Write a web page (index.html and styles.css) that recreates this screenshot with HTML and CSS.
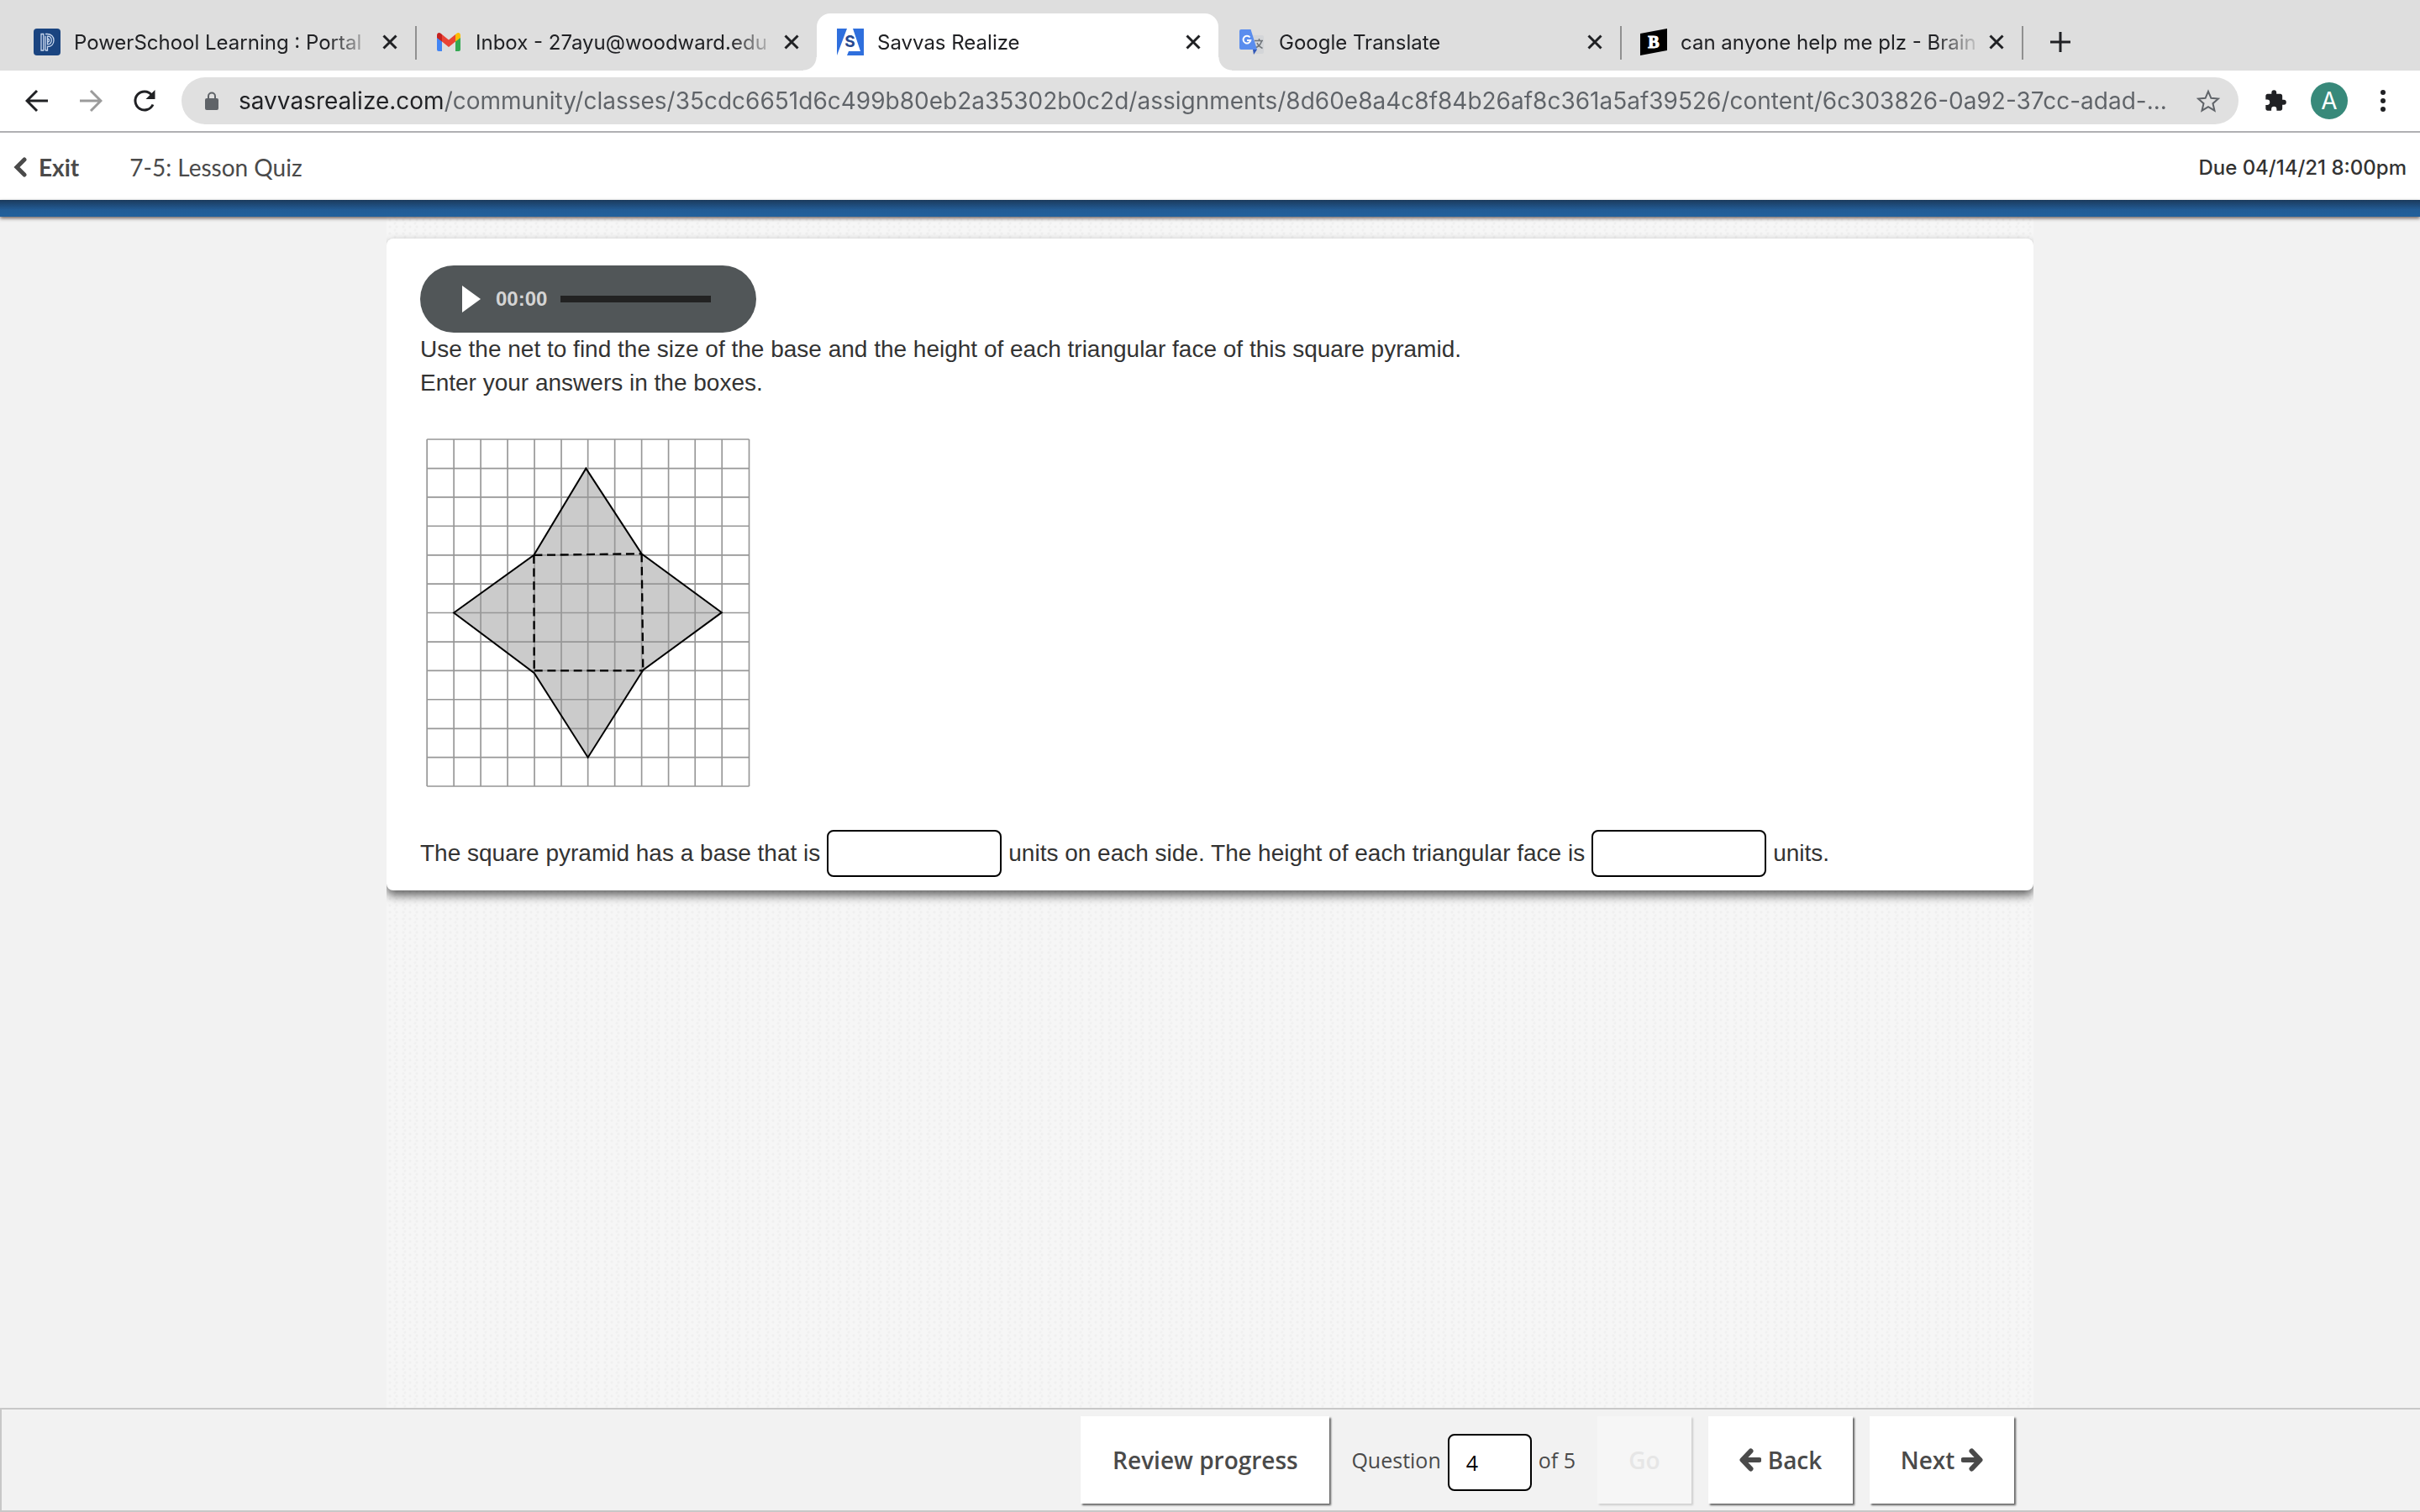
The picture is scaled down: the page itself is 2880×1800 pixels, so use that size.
FILE: index.html
```
<!DOCTYPE html>
<html lang="en">
<head>
    <meta charset="UTF-8">
    <meta name="viewport" content="width=device-width, initial-scale=1.0">
    <title>Savvas Realize</title>
    <link rel="stylesheet" href="styles.css">
</head>
<body>
    <!-- Browser tabs -->
    <nav class="tabs" aria-label="Tabs">
        <div class="tab">
            <svg class="favicon" viewBox="0 0 32 32">
                <rect width="32" height="32" rx="4" fill="#1a4480"/>
                <g fill="none" stroke="#c9d8ee" stroke-width="1.3">
                    <path d="M9 6.500v19.500h2.800V6.500zM14 26V8.800M14 26h2.500v-4.500c4.500 0 7.500-3 7.500-7.500s-3.200-7.500-8-7.500H14"/>
                    <path d="M16.500 9.200c2.800 0 4.700 2 4.700 4.800s-1.900 4.800-4.700 4.800zM16.500 12c1.400 0 2 .8 2 2s-.6 2-2 2"/>
                </g>
            </svg>
            <a class="tab-title" href="#">PowerSchool Learning : Portal</a>
            <button class="close" aria-label="Close tab"><svg viewBox="0 0 24 24"><path d="M4.500 4.500l15 15M19.500 4.500l-15 15"/></svg></button>
        </div>
        <div class="tab">
            <svg class="favicon" viewBox="0 0 32 32">
                <path d="M2 8v17q0 2 2 2h4V14z" fill="#4285f4"/>
                <path d="M30 8v17q0 2-2 2h-4V14z" fill="#34a853"/>
                <path d="M8 7l8 6.500L24 7v8.500L16 22l-8-6.500z" fill="#ea4335"/>
                <path d="M24 7l1.500-1.200C27.500 4.200 30 5.500 30 8v3l-6 4.500z" fill="#fbbc04"/>
                <path d="M8 7L6.500 5.800C4.500 4.200 2 5.500 2 8v3l6 4.500z" fill="#c5221f"/>
            </svg>
            <a class="tab-title" href="#">Inbox - 27ayu@woodward.edu</a>
            <button class="close" aria-label="Close tab"><svg viewBox="0 0 24 24"><path d="M4.500 4.500l15 15M19.500 4.500l-15 15"/></svg></button>
        </div>
        <div class="tab active">
            <svg class="favicon" viewBox="0 0 32 32">
                <path d="M0 0h32v32H0z" fill="#2f6fdd"/>
                <path d="M12 0h7l9 27H14l-2 5H0z" fill="#fff"/>
                <text x="15.500" y="22" text-anchor="middle" font-size="19" font-weight="700" fill="#27488f">S</text>
            </svg>
            <a class="tab-title" href="#">Savvas Realize</a>
            <button class="close" aria-label="Close tab"><svg viewBox="0 0 24 24"><path d="M4.500 4.500l15 15M19.500 4.500l-15 15"/></svg></button>
        </div>
        <div class="tab">
            <svg class="favicon" viewBox="0 0 32 32">
                <path d="M14 8h14q2 0 2 2v18q0 2-2 2H18z" fill="#d3d5d8"/>
                <path d="M17 25h5l-4 6z" fill="#3057b8"/>
                <path d="M3 1h11.500l7.500 24H3q-2 0-2-2V3q0-2 2-2z" fill="#5a8dee"/>
                <path d="M13.500 10.500a4.400 4.400 0 1 0 .8 3.500H10" fill="none" stroke="#fff" stroke-width="2"/>
                <path d="M19 14.500h10M24.500 12v2.500M27.500 14.500c-.8 4-3.500 6.500-6.500 8M22 17c1 2.500 3.500 5 6.500 6.500" fill="none" stroke="#6f7479" stroke-width="1.500"/>
            </svg>
            <a class="tab-title" href="#">Google Translate</a>
            <button class="close" aria-label="Close tab"><svg viewBox="0 0 24 24"><path d="M4.500 4.500l15 15M19.500 4.500l-15 15"/></svg></button>
        </div>
        <div class="tab">
            <svg class="favicon" viewBox="0 0 32 32">
                <path d="M0 6L32 0v26L0 32z" fill="#000"/>
                <text class="brainly-b" x="16" y="23" text-anchor="middle" font-size="20" font-weight="700" fill="#fff" stroke="#fff">B</text>
            </svg>
            <a class="tab-title" href="#">can anyone help me plz - Brain</a>
            <button class="close" aria-label="Close tab"><svg viewBox="0 0 24 24"><path d="M4.500 4.500l15 15M19.500 4.500l-15 15"/></svg></button>
        </div>
        <button class="new-tab" aria-label="New tab"><svg viewBox="0 0 24 24"><path d="M12 0v24M0 12h24"/></svg></button>
    </nav>

    <!-- Address bar -->
    <div class="toolbar">
        <div class="nav-buttons">
            <button class="tool" aria-label="Back"><svg viewBox="0 0 28 28"><path d="M27 14H3M14 2L2 14l12 12"/></svg></button>
            <button class="tool" aria-label="Forward" disabled><svg viewBox="0 0 28 28"><path d="M1 14h24M14 2l12 12-12 12"/></svg></button>
            <button class="tool" aria-label="Reload"><svg viewBox="0 0 28 28"><path d="M24 18.500A11 11 0 1 1 22.500 7"/><path class="solid" d="M26.500 1v11h-11z"/></svg></button>
        </div>
        <div class="address">
            <svg class="lock" viewBox="0 0 16 22"><path d="M2 8h12q2 0 2 2v10q0 2-2 2H2q-2 0-2-2V10q0-2 2-2z" fill="#5f6368"/><path d="M4 9V5.500a4 4 0 0 1 8 0V9" fill="none" stroke="#5f6368" stroke-width="2"/></svg>
            <input class="url" type="text" aria-label="Address" value="savvasrealize.com/community/classes/35cdc6651d6c499b80eb2a35302b0c2d/assignments/8d60e8a4c8f84b26af8c361a5af39526/content/6c303826-0a92-37cc-adad-...">
            <button class="star" aria-label="Bookmark this tab"><svg viewBox="0 0 28 28"><path d="M14 2.800l3.400 8 8.600.7-6.500 5.700 2 8.500-7.500-4.500-7.500 4.500 2-8.500L2 11.500l8.600-.7z"/></svg></button>
        </div>
        <div class="menu-buttons">
            <button class="tool" aria-label="Extensions"><svg viewBox="0 0 24 24"><path class="solid" d="M20.500 11H19V7c0-1.100-.9-2-2-2h-4V3.500a2.500 2.500 0 0 0-5 0V5H4c-1.100 0-2 .9-2 2v3.800h1.500a2.700 2.700 0 0 1 0 5.400H2V20c0 1.100.9 2 2 2h3.800v-1.500a2.700 2.700 0 0 1 5.400 0V22H17c1.100 0 2-.9 2-2v-4h1.500a2.500 2.500 0 0 0 0-5z"/></svg></button>
            <button class="avatar" aria-label="Profile">A</button>
            <button class="tool" aria-label="Menu"><svg viewBox="0 0 28 28"><g class="dots"><circle cx="14" cy="4" r="3"/><circle cx="14" cy="14" r="3"/><circle cx="14" cy="24" r="3"/></g></svg></button>
        </div>
    </div>

    <header class="quiz-header">
        <a class="exit" href="#">
            <svg viewBox="0 0 16 24"><path d="M13 3L4 12l9 9"/></svg>
            Exit
        </a>
        <h1 class="quiz-title">7-5: Lesson Quiz</h1>
        <span class="due">Due 04/14/21 8:00pm</span>
    </header>
    <div class="blue-bar"></div>

    <main class="content">
        <section class="card">
            <div class="audio">
                <button class="play" aria-label="Play"><svg viewBox="0 0 22 32"><path d="M0 0l22 16L0 32z" fill="#fff"/></svg></button>
                <span class="time">00:00</span>
                <div class="track"></div>
            </div>
            <p>Use the net to find the size of the base and the height of each triangular face of this square pyramid.</p>
            <p>Enter your answers in the boxes.</p>

            <!-- Net of the pyramid on a 12 x 12 grid -->
            <svg class="net" viewBox="0 0 1158 1246" role="img" aria-label="Net of a square pyramid on a grid">
                <polygon fill="#cbcbcb" points="571,107 770,412 1056,622 775,828 578,1140 386,838 99,623 385,417"/>
                <path fill="none" stroke="#979797" stroke-width="5" d="M3 3v1240M99 3v1240M195 3v1240M291 3v1240M387 3v1240M483 3v1240M578 3v1240M674 3v1240M770 3v1240M866 3v1240M961 3v1240M1057 3v1240M1154 3v1240M3 3h1151M3 107h1151M3 210h1151M3 313h1151M3 417h1151M3 520h1151M3 623h1151M3 727h1151M3 830h1151M3 933h1151M3 1037h1151M3 1140h1151M3 1243h1151"/>
                <polygon fill="none" stroke="#000" stroke-width="6" points="571,107 770,412 1056,622 775,828 578,1140 386,838 99,623 385,417"/>
                <path fill="none" stroke="#000" stroke-width="7" stroke-dasharray="30 17" d="M385 417L770 412M385 417L386 830M770 412L775 830M386 830H775"/>
            </svg>

            <div class="answers">
                <label for="base">The square pyramid has a base that is</label>
                <input id="base" class="answer" type="text">
                <label for="height">units on each side. The height of each triangular face is</label>
                <input id="height" class="answer" type="text">
                <span>units.</span>
            </div>
        </section>
    </main>

    <footer class="quiz-footer">
        <div class="footer-inner">
            <button class="btn review">Review progress</button>
            <div class="jump">
                <label for="question">Question</label>
                <input id="question" class="number" type="text" value="4">
                <span>of 5</span>
            </div>
            <button class="btn go" disabled>Go</button>
            <button class="btn step"><svg viewBox="0 0 26 28"><path d="M13.500 3.500L3.500 14l10 10.500M4 14h19.500"/></svg>Back</button>
            <button class="btn step">Next<svg viewBox="0 0 26 28"><path d="M12.500 3.500L22.500 14l-10 10.500M22 14H2.500"/></svg></button>
        </div>
    </footer>
</body>
</html>
```
FILE: styles.css
```
* {
    margin: 0;
    padding: 0;
    box-sizing: border-box;
}

body {
    font-family: Inter, Roboto, sans-serif;
    min-height: 100vh;
    display: flex;
    flex-direction: column;
    background: #f2f2f2;
    color: #202124;
}

button {
    border: none;
    background: none;
    font: inherit;
    color: inherit;
    cursor: pointer;
}

a {
    color: inherit;
    text-decoration: none;
}

/* Tabs */
.tabs {
    display: flex;
    align-items: flex-end;
    height: 84px;
    padding: 16px 16px 0;
    background: #dedede;
}

.tab {
    position: relative;
    display: flex;
    align-items: center;
    flex: 0 1 478px;
    min-width: 0;
    height: 68px;
    padding: 0 18px 0 24px;
    font-size: 24px;
}

.tab::after {
    content: "";
    position: absolute;
    right: -2px;
    top: 15px;
    width: 2px;
    height: 40px;
    background: #909090;
}

.tab:has(+ .active)::after {
    display: none;
}

.tab.active {
    background: #fff;
    border-radius: 16px 16px 0 0;
}

/* curved feet of the active tab */
.tab.active::before,
.tab.active::after {
    content: "";
    position: absolute;
    top: auto;
    bottom: 0;
    width: 16px;
    height: 16px;
}

.tab.active::before {
    left: -16px;
    background: radial-gradient(circle at 0 0, transparent 15px, #fff 16px);
}

.tab.active::after {
    right: -16px;
    background: radial-gradient(circle at 100% 0, transparent 15px, #fff 16px);
}

.favicon {
    flex: none;
    width: 32px;
    height: 32px;
    margin-right: 16px;
}

.brainly-b {
    font-family: "Liberation Serif", serif;
}

.tab-title {
    flex: 1;
    min-width: 0;
    margin-right: 4px;
    overflow: hidden;
    white-space: nowrap;
    -webkit-mask-image: linear-gradient(to right, #000 84%, transparent);
    mask-image: linear-gradient(to right, #000 84%, transparent);
}

.close {
    flex: none;
    width: 24px;
    height: 24px;
}

.close svg,
.new-tab svg {
    display: block;
    width: 24px;
    height: 24px;
    fill: none;
    stroke: #202124;
    stroke-width: 3;
}

.new-tab {
    align-self: center;
    width: 24px;
    height: 24px;
    margin-left: 34px;
}

/* Toolbar */
.toolbar {
    display: flex;
    align-items: center;
    gap: 20px;
    height: 74px;
    padding: 0 20px;
    background: #fff;
    border-bottom: 2px solid #b0b0b3;
}

.nav-buttons {
    display: flex;
    gap: 16px;
}

.menu-buttons {
    display: flex;
    align-items: center;
    gap: 18px;
}

.tool {
    display: flex;
    align-items: center;
    justify-content: center;
    width: 48px;
    height: 48px;
}

.tool svg {
    width: 28px;
    height: 28px;
    fill: none;
    stroke: #202124;
    stroke-width: 3;
}

.tool:disabled svg {
    stroke: #9b9b9b;
}

.tool .solid,
.tool .dots {
    fill: #202124;
    stroke: none;
}

.address {
    flex: 1;
    display: flex;
    align-items: center;
    height: 56px;
    padding: 0 22px 0 28px;
    border-radius: 28px;
    background: #e0e0e0;
}

.lock {
    flex: none;
    width: 16px;
    height: 22px;
}

.url {
    flex: 1;
    min-width: 0;
    margin-left: 24px;
    border: none;
    outline: none;
    font-family: inherit;
    font-size: 28px;
    /* host name is darker than the path */
    background: linear-gradient(to right, #202124 244px, #5f6368 244px);
    -webkit-background-clip: text;
    background-clip: text;
    color: transparent;
}

.star {
    flex: none;
    width: 28px;
    height: 28px;
}

.star svg {
    display: block;
    width: 28px;
    height: 28px;
    fill: none;
    stroke: #5f6368;
    stroke-width: 2;
}

.avatar {
    width: 44px;
    height: 44px;
    border-radius: 50%;
    background: #38897a;
    color: #fff;
    font-size: 28px;
}

/* Quiz header */
.quiz-header {
    display: flex;
    align-items: center;
    height: 80px;
    padding: 2px 16px 0;
    background: #fff;
    color: #4a4a4a;
    font-family: Lato, sans-serif;
    font-size: 28px;
}

.exit {
    display: flex;
    align-items: center;
    gap: 14px;
    font-weight: 700;
}

.exit svg {
    width: 16px;
    height: 24px;
    fill: none;
    stroke: #4a4a4a;
    stroke-width: 5;
    stroke-linecap: round;
}

.quiz-title {
    margin-left: 60px;
    font-size: 28px;
    font-weight: 400;
}

.due {
    margin-left: auto;
    font-family: Inter, sans-serif;
    font-size: 24px;
    font-weight: 500;
    color: #333;
}

.blue-bar {
    position: relative;
    height: 20px;
    background: linear-gradient(#1b3a5c, #225c96 60%, #22609c);
    box-shadow: 0 2px 4px rgba(60, 40, 35, 0.7);
}

/* Question */
.content {
    flex: 1;
    width: 100%;
    max-width: 1960px;
    margin: 0 auto;
    padding: 26px 0;
    overflow: hidden;
    background-color: #f6f6f6;
    background-image:
        radial-gradient(circle, #efefef 1px, transparent 2px),
        radial-gradient(circle, #f0f0f0 1px, transparent 2px);
    background-size: 8px 8px, 12px 8px;
    background-position: 0 0, 4px 4px;
}

.card {
    padding: 32px 40px 16px;
    border-radius: 8px;
    background: #fff;
    box-shadow: 0 6px 12px rgba(0, 0, 0, 0.6);
    font-family: "Liberation Sans", Arial, sans-serif;
    font-size: 28px;
    line-height: 40px;
    color: #333;
}

.audio {
    display: flex;
    align-items: center;
    width: 400px;
    height: 80px;
    padding: 0 54px 0 50px;
    border-radius: 40px;
    background: #515658;
}

.play,
.play svg {
    display: block;
    width: 22px;
    height: 32px;
}

.time {
    margin-left: 18px;
    font-size: 24px;
    font-weight: 700;
    color: #d4d4d4;
}

.track {
    flex: 1;
    height: 8px;
    margin-left: 16px;
    background: #222;
}

.net {
    display: block;
    width: 386px;
    height: 415px;
    margin: 46px 0 51px 7px;
}

.answers {
    display: flex;
    flex-wrap: wrap;
    align-items: center;
    gap: 8px;
}

.answer {
    width: 208px;
    height: 56px;
    padding: 0 16px;
    border: 2px solid #000;
    border-radius: 8px;
    background: #fff;
    font: inherit;
}

/* Footer */
.quiz-footer {
    padding: 8px 0;
    border: 2px solid #c8c8c8;
    border-right: none;
    background: #f2f2f2;
    font-family: "Open Sans", sans-serif;
    color: #4a4a4a;
}

.footer-inner {
    display: flex;
    align-items: center;
    justify-content: flex-end;
    max-width: 1960px;
    margin: 0 auto;
    padding-right: 24px;
}

.btn {
    display: flex;
    align-items: center;
    justify-content: center;
    gap: 8px;
    height: 104px;
    background: #fff;
    box-shadow: 2px 2px 2px rgba(0, 0, 0, 0.6);
    font-size: 28px;
    font-weight: 600;
}

.review {
    width: 296px;
}

.go {
    width: 112px;
    background: #f6f6f6;
    box-shadow: 2px 2px 2px rgba(0, 0, 0, 0.15);
    color: #e6e6e6;
}

.step {
    width: 172px;
    margin-left: 20px;
}

.step svg {
    width: 26px;
    height: 28px;
    fill: none;
    stroke: #4a4a4a;
    stroke-width: 6;
    stroke-linecap: round;
    stroke-linejoin: round;
}

.jump {
    display: flex;
    align-items: center;
    gap: 8px;
    margin: 0 26px;
    font-size: 25px;
}

.number {
    width: 100px;
    height: 68px;
    margin-top: 6px;
    padding: 0 20px;
    border: 2px solid #000;
    border-radius: 8px;
    background: #fff;
    font: inherit;
    color: #000;
}
```
